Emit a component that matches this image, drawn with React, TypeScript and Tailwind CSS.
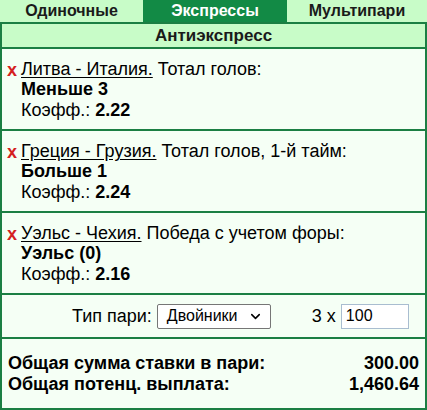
import { ChevronDown } from 'lucide-react';

type Bet = {
    match: string;
    market: string;
    pick: string;
    odds: string;
};

const bets: Bet[] = [
    { match: 'Литва - Италия.', market: 'Тотал голов:', pick: 'Меньше 3', odds: '2.22' },
    { match: 'Греция - Грузия.', market: 'Тотал голов, 1-й тайм:', pick: 'Больше 1', odds: '2.24' },
    { match: 'Уэльс - Чехия.', market: 'Победа с учетом форы:', pick: 'Уэльс (0)', odds: '2.16' },
];

export default function App() {
    return (
        <div className="w-[427px] h-[410px] bg-white text-black text-[18px] leading-[20px] font-['Liberation_Sans',Arial,sans-serif]">
            {/* tabs */}
            <div className="flex h-[22px] bg-[#c8fcc8] font-bold text-[16px]">
                <div className="w-[143px] flex items-center justify-center text-[#1a1a1a]">Одиночные</div>
                <div className="w-[144px] flex items-center justify-center bg-[#128a45] text-white">Экспрессы</div>
                <div className="flex-1 flex items-center justify-center text-[#1a1a1a]">Мультипари</div>
            </div>

            <div className="h-[388px] flex flex-col border-2 border-[#1b7f43] bg-[#f5fff5]">
                <div className="h-[25px] shrink-0 flex items-center justify-center bg-[#c8fcc8] font-bold text-[17px] text-[#1a1a1a] border-b-2 border-[#1b7f43]">
                    Антиэкспресс
                </div>

                {bets.map((b) => (
                    <div key={b.match} className="flex shrink-0 pl-[5px] pt-[10px] h-[82px] border-b-2 border-[#1b7f43]">
                        <span className="w-[14px] text-[#d42020] font-bold text-[18px] leading-[22px]">x</span>
                        <div className="flex flex-col">
                            <div>
                                <span className="underline underline-offset-2">{b.match}</span> {b.market}
                            </div>
                            <div className="font-bold">{b.pick}</div>
                            <div className="mt-[1px]">
                                Коэфф.: <span className="font-bold">{b.odds}</span>
                            </div>
                        </div>
                    </div>
                ))}

                <div className="flex shrink-0 items-center h-[44px] border-b-2 border-[#1b7f43]">
                    <span className="ml-[70px]">Тип пари:</span>
                    <div className="ml-[5px] w-[114px] h-[25px] flex items-center justify-between pl-[9px] pr-[7px] bg-white border border-[#767676] rounded-[2px] text-[16px]">
                        <span>Двойники</span>
                        <ChevronDown className="w-[15px] h-[15px]" strokeWidth={2.5} />
                    </div>
                    <span className="ml-[41px]">3 x</span>
                    <div className="ml-[5px] w-[68px] h-[25px] flex items-center pl-[4px] bg-white border border-[#a9bdd0] text-[16px]">
                        100
                    </div>
                </div>

                <div className="flex flex-col px-[6px] pt-[14px] font-bold leading-[21px]">
                    <div className="flex justify-between">
                        <span>Общая сумма ставки в пари:</span>
                        <span>300.00</span>
                    </div>
                    <div className="flex justify-between">
                        <span>Общая потенц. выплата:</span>
                        <span>1,460.64</span>
                    </div>
                </div>
            </div>
        </div>
    );
}
